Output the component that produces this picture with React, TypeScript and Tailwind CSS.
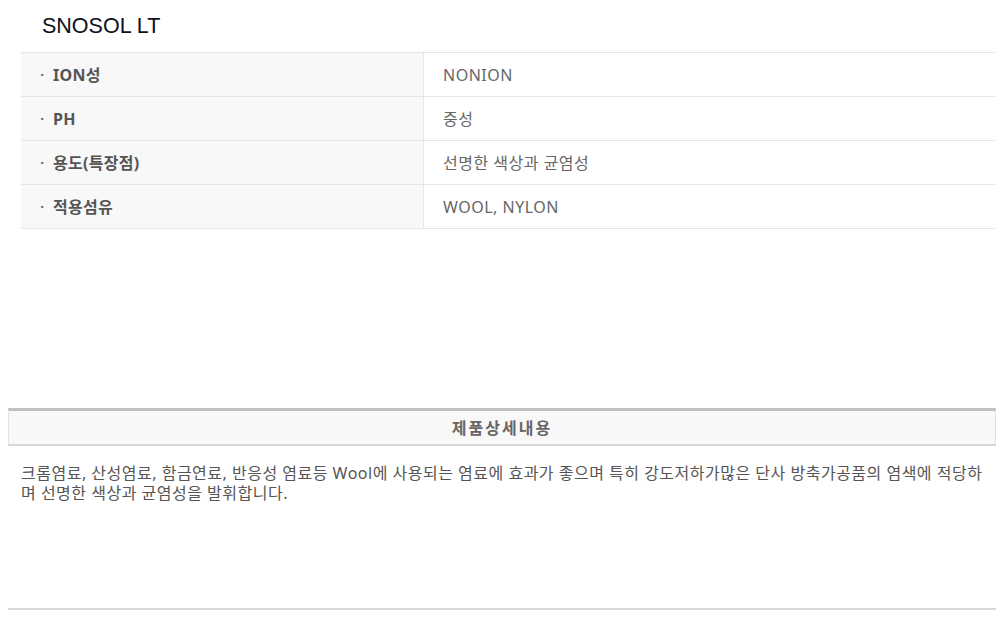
const SPECS = [
  { label: 'ION성', value: 'NONION' },
  { label: 'PH', value: '중성' },
  { label: '용도(특장점)', value: '선명한 색상과 균염성' },
  { label: '적용섬유', value: 'WOOL, NYLON' },
];

const font = "font-['Noto_Sans','Noto_Sans_CJK_KR',sans-serif]";

export default function App() {
  return (
    <div className={`w-[1007px] h-[625px] bg-white overflow-hidden ${font}`}>
      <div className="px-[21px] pr-[12px]">
        <h1 className="h-[52px] pl-[21px] flex items-center text-[21.5px] text-[#10101c] font-['Liberation_Sans',sans-serif] pt-[1px]">
          SNOSOL LT
        </h1>
        <div className="border-t border-[#e5e5e5]">
          {SPECS.map((s) => (
            <div key={s.label} className="flex h-[44px] border-b border-[#e5e5e5]">
              <div className="w-[403px] bg-[#f8f8f8] border-r border-[#e5e5e5] flex items-center pl-[19px] text-[16px] font-bold text-[#555] tracking-[0.3px]">
                <span className="w-[13px] font-normal">·</span>
                {s.label}
              </div>
              <div className="flex-1 flex items-center pl-[19px] text-[16px] text-[#666] tracking-[0.5px]">{s.value}</div>
            </div>
          ))}
        </div>
      </div>

      <div className="mt-[179px] mx-[8px] mr-[11px]">
        <div className="h-[38px] bg-[#f8f8f8] border-t-[3px] border-t-[#c0c0c0] border-b-2 border-b-[#d6d6d6] border-x border-x-[#e3e3e3] flex items-center justify-center text-[16px] font-bold text-[#666] tracking-[2px]">
          제품상세내용
        </div>
        <p className="mt-[17px] pl-[13px] pr-[11px] text-[16px] leading-[20px] text-[#555] h-[145px] tracking-[0.5px] break-all">
          크롬염료, 산성염료, 함금연료, 반응성 염료등 Wool에 사용되는 염료에 효과가 좋으며 특히 강도저하가많은 단사 방축가공품의 염색에 적당하며 선명한 색상과 균염성을 발휘합니다.
        </p>
        <div className="h-[2px] bg-[#d8d8d8]" />
      </div>
    </div>
  );
}
